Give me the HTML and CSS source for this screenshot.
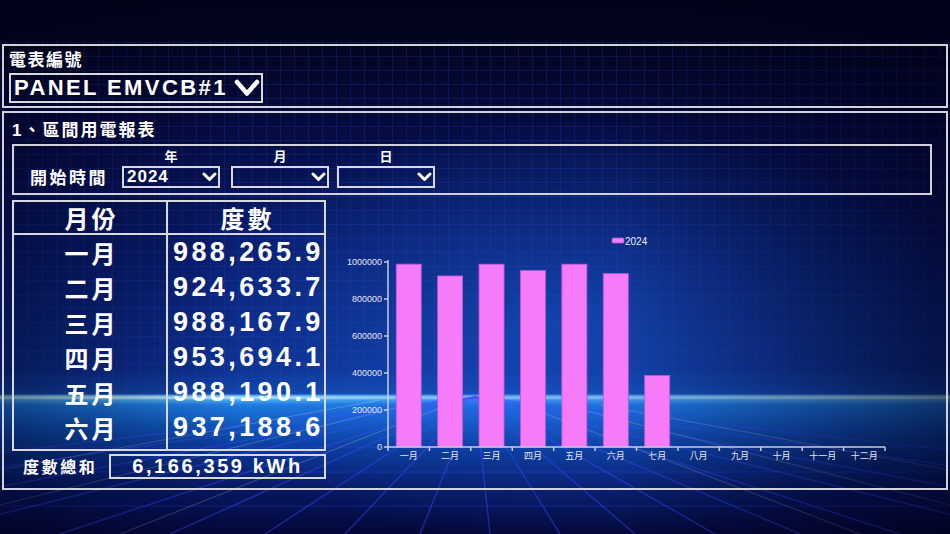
FILE: index.html
```html
<!DOCTYPE html>
<html lang="zh-Hant">
<head>
<meta charset="utf-8">
<title>區間用電報表</title>
<link rel="stylesheet" href="styles.css">
</head>
<body>
<div class="bg" aria-hidden="true">
  <svg class="bg-svg" viewBox="0 0 950 534" preserveAspectRatio="none">
    <defs>
      <linearGradient id="base" x1="0" y1="0" x2="0" y2="534" gradientUnits="userSpaceOnUse">
        <stop offset="0" stop-color="#02031a"/>
        <stop offset="0.08" stop-color="#03061f"/>
        <stop offset="0.22" stop-color="#050a3c"/>
        <stop offset="0.48" stop-color="#081c6c"/>
        <stop offset="0.69" stop-color="#0c2e8c"/>
        <stop offset="0.737" stop-color="#1046a8"/>
        <stop offset="0.742" stop-color="#8adcff"/>
        <stop offset="0.745" stop-color="#d0f6ff"/>
        <stop offset="0.749" stop-color="#4ab0f6"/>
        <stop offset="0.76" stop-color="#1c7ce0"/>
        <stop offset="0.8" stop-color="#0f54b8"/>
        <stop offset="0.845" stop-color="#0a3592"/>
        <stop offset="0.92" stop-color="#061660"/>
        <stop offset="1" stop-color="#040838"/>
      </linearGradient>
      <radialGradient id="glow" cx="560" cy="330" r="420" gradientUnits="userSpaceOnUse" gradientTransform="translate(560 330) scale(1 0.5) translate(-560 -330)">
        <stop offset="0" stop-color="#1a5cd0" stop-opacity="0.55"/>
        <stop offset="1" stop-color="#1a5cd0" stop-opacity="0"/>
      </radialGradient>
      <linearGradient id="vig" x1="0" y1="0" x2="950" y2="0" gradientUnits="userSpaceOnUse">
        <stop offset="0" stop-color="#000018" stop-opacity="0.45"/>
        <stop offset="0.25" stop-color="#000018" stop-opacity="0"/>
        <stop offset="0.65" stop-color="#000018" stop-opacity="0"/>
        <stop offset="1" stop-color="#000018" stop-opacity="0.6"/>
      </linearGradient>
      <pattern id="grid" width="14" height="14" patternUnits="userSpaceOnUse">
        <path d="M0 0H14M0 0V14" stroke="#2c46e0" stroke-opacity="0.22" stroke-width="2" fill="none"/>
      </pattern>
    </defs>
    <rect x="0" y="0" width="950" height="534" fill="url(#base)"/>
    <rect x="0" y="0" width="950" height="534" fill="url(#glow)"/>
    <rect x="0" y="40" width="950" height="355" fill="url(#grid)"/>
    <g stroke="#3a4cff" stroke-opacity="0.45" stroke-width="1.4">
      <line x1="475" y1="397" x2="-700" y2="534"/>
      <line x1="475" y1="397" x2="-450" y2="534"/>
      <line x1="475" y1="397" x2="-250" y2="534"/>
      <line x1="475" y1="397" x2="-80" y2="534"/>
      <line x1="475" y1="397" x2="60" y2="534"/>
      <line x1="475" y1="397" x2="170" y2="534"/>
      <line x1="475" y1="397" x2="265" y2="534"/>
      <line x1="475" y1="397" x2="345" y2="534"/>
      <line x1="475" y1="397" x2="420" y2="534"/>
      <line x1="475" y1="397" x2="490" y2="534"/>
      <line x1="475" y1="397" x2="560" y2="534"/>
      <line x1="475" y1="397" x2="635" y2="534"/>
      <line x1="475" y1="397" x2="715" y2="534"/>
      <line x1="475" y1="397" x2="800" y2="534"/>
      <line x1="475" y1="397" x2="900" y2="534"/>
      <line x1="475" y1="397" x2="1030" y2="534"/>
      <line x1="475" y1="397" x2="1200" y2="534"/>
      <line x1="475" y1="397" x2="1420" y2="534"/>
      <line x1="475" y1="397" x2="1700" y2="534"/>
    </g>
    <g stroke="#3a4cff" stroke-opacity="0.3" stroke-width="1.2">
      <line x1="0" y1="404" x2="950" y2="404"/>
      <line x1="0" y1="414" x2="950" y2="414"/>
      <line x1="0" y1="428" x2="950" y2="428"/>
      <line x1="0" y1="447" x2="950" y2="447"/>
      <line x1="0" y1="472" x2="950" y2="472"/>
      <line x1="0" y1="506" x2="950" y2="506"/>
    </g>
    <g stroke="#ffffff" stroke-opacity="0.18" stroke-width="1.2">
      <line x1="0" y1="470" x2="380" y2="400"/>
      <line x1="0" y1="505" x2="420" y2="402"/>
      <line x1="120" y1="534" x2="450" y2="404"/>
      <line x1="950" y1="470" x2="600" y2="405"/>
      <line x1="950" y1="505" x2="560" y2="404"/>
      <line x1="860" y1="534" x2="520" y2="404"/>
    </g>
    <rect x="0" y="0" width="950" height="534" fill="url(#vig)"/>
  </svg>
</div>

<main class="page">
  <section class="panel meter">
    <div class="meter-label">電表編號</div>
    <div class="meter-select">
      <span class="meter-value">PANEL EMVCB#1</span>
      <svg class="chev-big" viewBox="0 0 26 18"><polyline points="3,3 13,14.5 23,3"/></svg>
    </div>
  </section>

  <section class="panel report">
    <div class="report-title">1、區間用電報表</div>

    <div class="filter">
      <div class="filter-label">開始時間</div>
      <div class="field">
        <div class="field-cap">年</div>
        <div class="sel"><span class="sel-value">2024</span><svg class="chev" viewBox="0 0 15 10"><polyline points="2,2 7.5,7.5 13,2"/></svg></div>
      </div>
      <div class="field field-m">
        <div class="field-cap">月</div>
        <div class="sel"><span class="sel-value"></span><svg class="chev" viewBox="0 0 15 10"><polyline points="2,2 7.5,7.5 13,2"/></svg></div>
      </div>
      <div class="field field-d">
        <div class="field-cap">日</div>
        <div class="sel"><span class="sel-value"></span><svg class="chev" viewBox="0 0 15 10"><polyline points="2,2 7.5,7.5 13,2"/></svg></div>
      </div>
    </div>

    <div class="report-body">
      <div class="left-col">
        <div class="tbl">
          <div class="tr th"><div class="c1">月份</div><div class="c2">度數</div></div>
          <div class="tr"><div class="c1">一月</div><div class="c2 num">988,265.9</div></div>
          <div class="tr"><div class="c1">二月</div><div class="c2 num">924,633.7</div></div>
          <div class="tr"><div class="c1">三月</div><div class="c2 num">988,167.9</div></div>
          <div class="tr"><div class="c1">四月</div><div class="c2 num">953,694.1</div></div>
          <div class="tr"><div class="c1">五月</div><div class="c2 num">988,190.1</div></div>
          <div class="tr"><div class="c1">六月</div><div class="c2 num">937,188.6</div></div>
        </div>
        <div class="total">
          <div class="total-label">度數總和</div>
          <div class="total-box">6,166,359 kWh</div>
        </div>
      </div>

      <svg class="chart" viewBox="0 0 620 288">
        <g class="legend">
          <rect x="286" y="38" width="12" height="5" rx="1.5" class="bar"/>
          <text x="299" y="45" class="legend-text">2024</text>
        </g>
        <g class="bars">
          <rect class="bar" x="70.21" y="64.17" width="25" height="182.83"/>
          <rect class="bar" x="111.63" y="75.94" width="25" height="171.06"/>
          <rect class="bar" x="153.04" y="64.19" width="25" height="182.81"/>
          <rect class="bar" x="194.46" y="70.57" width="25" height="176.43"/>
          <rect class="bar" x="235.88" y="64.18" width="25" height="182.82"/>
          <rect class="bar" x="277.29" y="73.62" width="25" height="173.38"/>
          <rect class="bar" x="318.71" y="175.55" width="25" height="71.45"/>
        </g>
        <g class="axis">
          <line x1="62" y1="60" x2="62" y2="248"/>
          <line x1="61" y1="247" x2="559" y2="247"/>
          <line x1="58" y1="62" x2="62" y2="62"/>
          <line x1="58" y1="99" x2="62" y2="99"/>
          <line x1="58" y1="136" x2="62" y2="136"/>
          <line x1="58" y1="173" x2="62" y2="173"/>
          <line x1="58" y1="210" x2="62" y2="210"/>
          <line x1="58" y1="247" x2="62" y2="247"/>
          <line x1="62" y1="247" x2="62" y2="251"/>
          <line x1="103.42" y1="247" x2="103.42" y2="251"/>
          <line x1="144.83" y1="247" x2="144.83" y2="251"/>
          <line x1="186.25" y1="247" x2="186.25" y2="251"/>
          <line x1="227.67" y1="247" x2="227.67" y2="251"/>
          <line x1="269.08" y1="247" x2="269.08" y2="251"/>
          <line x1="310.5" y1="247" x2="310.5" y2="251"/>
          <line x1="351.92" y1="247" x2="351.92" y2="251"/>
          <line x1="393.33" y1="247" x2="393.33" y2="251"/>
          <line x1="434.75" y1="247" x2="434.75" y2="251"/>
          <line x1="476.17" y1="247" x2="476.17" y2="251"/>
          <line x1="517.58" y1="247" x2="517.58" y2="251"/>
          <line x1="559" y1="247" x2="559" y2="251"/>
        </g>
        <g class="ylabels">
          <text x="56" y="65">1000000</text>
          <text x="56" y="102">800000</text>
          <text x="56" y="139">600000</text>
          <text x="56" y="176">400000</text>
          <text x="56" y="213">200000</text>
          <text x="56" y="250">0</text>
        </g>
        <g class="xlabels">
          <text x="82.71" y="259">一月</text>
          <text x="124.13" y="259">二月</text>
          <text x="165.54" y="259">三月</text>
          <text x="206.96" y="259">四月</text>
          <text x="248.38" y="259">五月</text>
          <text x="289.79" y="259">六月</text>
          <text x="331.21" y="259">七月</text>
          <text x="372.63" y="259">八月</text>
          <text x="414.04" y="259">九月</text>
          <text x="455.46" y="259">十月</text>
          <text x="496.88" y="259">十一月</text>
          <text x="538.29" y="259">十二月</text>
        </g>
      </svg>
    </div>
  </section>
</main>
</body>
</html>
```

FILE: styles.css
```css
* { box-sizing: border-box; }

html, body {
  margin: 0;
  padding: 0;
  width: 950px;
  height: 534px;
  overflow: hidden;
  background: #03051c;
  color: #ffffff;
  font-family: "Liberation Sans", "Noto Sans CJK TC", Arial, sans-serif;
  font-weight: bold;
}

.bg {
  position: absolute;
  left: 0;
  top: 0;
  width: 950px;
  height: 534px;
  z-index: 0;
}

.bg-svg {
  display: block;
  width: 950px;
  height: 534px;
}

.page {
  position: relative;
  z-index: 1;
  padding: 44px 2px 0 2px;
}

.panel {
  border: 2px solid #d2d3da;
}

/* ---------- meter panel ---------- */
.meter {
  height: 64px;
  padding: 3px 5px;
}

.meter-label {
  font-family: "Noto Sans CJK TC", sans-serif;
  font-size: 17px;
  line-height: 20px;
  letter-spacing: 1.5px;
}

.meter-select {
  margin-top: 4px;
  width: 254px;
  height: 30px;
  border: 2px solid #d8d9df;
  display: flex;
  align-items: center;
  justify-content: space-between;
  padding: 0 1px 0 3px;
}

.meter-value {
  font-size: 22px;
  line-height: 26px;
  letter-spacing: 2.4px;
}

.chev-big {
  width: 26px;
  height: 18px;
  display: block;
}

.chev-big polyline,
.chev polyline {
  fill: none;
  stroke: #ffffff;
  stroke-linecap: round;
  stroke-linejoin: round;
}

.chev-big polyline { stroke-width: 4.5; }

/* ---------- report panel ---------- */
.report {
  margin-top: 3px;
  height: 379px;
  padding: 8px 0 0 8px;
}

.report-title {
  font-family: "Liberation Sans", "Noto Sans CJK TC", sans-serif;
  font-size: 17px;
  line-height: 20px;
  letter-spacing: 2px;
}

.filter {
  margin-top: 3px;
  width: 920px;
  height: 51px;
  border: 2px solid #d2d3da;
  display: flex;
  align-items: flex-end;
  padding: 2px 0 5px 16px;
}

.filter-label {
  font-family: "Noto Sans CJK TC", sans-serif;
  font-size: 17px;
  line-height: 22px;
  letter-spacing: 2.5px;
  width: 92px;
}

.field {
  width: 98px;
  display: flex;
  flex-direction: column;
  align-items: center;
}

.field-m { margin-left: 11px; }
.field-d { margin-left: 8px; }

.field-cap {
  font-family: "Noto Sans CJK TC", sans-serif;
  font-size: 13px;
  line-height: 16px;
  margin-bottom: 2px;
}

.sel {
  width: 98px;
  height: 22px;
  border: 2px solid #d8d9df;
  display: flex;
  align-items: center;
  justify-content: space-between;
  padding: 0 1px 0 3px;
}

.sel-value {
  font-size: 17px;
  line-height: 18px;
  letter-spacing: 1px;
}

.chev {
  width: 15px;
  height: 10px;
  display: block;
}

.chev polyline { stroke-width: 3; }

/* ---------- body ---------- */
.report-body {
  margin-top: 5px;
  display: flex;
  align-items: flex-start;
}

.left-col {
  width: 314px;
  flex: none;
}

.tbl {
  height: 251px;
  border: 2px solid #d8d9df;
  overflow: hidden;
  background: linear-gradient(to right, transparent 152px, #d8d9df 152px, #d8d9df 154px, transparent 154px);
}

.tr {
  display: flex;
  height: 35px;
}

.tr .c1 {
  width: 154px;
  border-right: 2px solid #d8d9df;
  text-align: center;
  font-family: "Noto Sans CJK TC", sans-serif;
  font-size: 24px;
  line-height: 35px;
  letter-spacing: 3px;
  padding-left: 3px;
}

.tr .c2 {
  flex: 1;
  text-align: center;
  font-size: 24px;
  line-height: 35px;
}

.th {
  height: 33px;
  border-bottom: 2px solid #d8d9df;
}

.th .c1,
.th .c2 {
  font-family: "Noto Sans CJK TC", sans-serif;
  font-size: 24px;
  line-height: 31px;
  letter-spacing: 3px;
}

.th .c2 { padding-left: 3px; }

.c2.num {
  font-family: "Liberation Sans", sans-serif;
  font-size: 27px;
  letter-spacing: 3.4px;
  text-align: left;
  padding-left: 5px;
}

.total {
  margin-top: 3px;
  display: flex;
  align-items: center;
}

.total-label {
  width: 97px;
  padding-left: 11px;
  font-family: "Noto Sans CJK TC", sans-serif;
  font-size: 16px;
  line-height: 21px;
  letter-spacing: 2.6px;
}

.total-box {
  width: 217px;
  height: 25px;
  border: 2px solid #d8d9df;
  text-align: center;
  font-size: 20px;
  line-height: 21px;
  letter-spacing: 2.6px;
}

/* ---------- chart ---------- */
.chart {
  display: block;
  width: 620px;
  height: 288px;
  flex: none;
}

.bar {
  fill: #f67bf8;
  stroke: #b45ad0;
  stroke-width: 0.8;
}

.axis line {
  stroke: #c9ccd9;
  stroke-width: 1.5;
}

.ylabels text {
  font-family: "Liberation Sans", sans-serif;
  font-weight: normal;
  font-size: 9px;
  fill: #e4e6f0;
  text-anchor: end;
}

.xlabels text {
  font-family: "Noto Sans CJK TC", sans-serif;
  font-weight: normal;
  font-size: 9px;
  fill: #e4e6f0;
  text-anchor: middle;
}

.legend-text {
  font-family: "Liberation Sans", sans-serif;
  font-weight: normal;
  font-size: 10px;
  fill: #e8eaf2;
}
```
